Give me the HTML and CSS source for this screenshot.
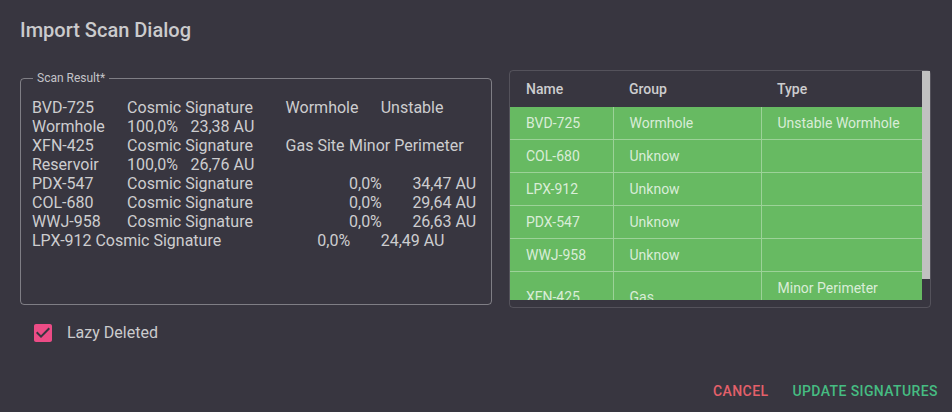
FILE: index.html
```html
<!DOCTYPE html>
<html>
<head>
<meta charset="utf-8">
<link rel="stylesheet" href="styles.css">
</head>
<body>
<div class="dialog">
  <h2 class="title">Import Scan Dialog</h2>
  <div class="content">
    <div class="left">
      <fieldset class="scan">
        <legend>Scan Result*</legend>
        <div class="scan-text">
          <div class="ln"><span class="seg t3">BVD-725</span><span class="seg t5">Cosmic Signature</span><span class="seg t3">Wormhole</span>Unstable</div>
          <div class="ln"><span class="seg t3">Wormhole</span><span class="seg t2">100,0%</span>23,38 AU</div>
          <div class="ln"><span class="seg t3">XFN-425</span><span class="seg t5">Cosmic Signature</span><span class="seg t2">Gas Site</span>Minor Perimeter</div>
          <div class="ln"><span class="seg t3">Reservoir</span><span class="seg t2">100,0%</span>26,76 AU</div>
          <div class="ln"><span class="seg t3">PDX-547</span><span class="seg t7">Cosmic Signature</span><span class="seg t2">0,0%</span>34,47 AU</div>
          <div class="ln"><span class="seg t3">COL-680</span><span class="seg t7">Cosmic Signature</span><span class="seg t2">0,0%</span>29,64 AU</div>
          <div class="ln"><span class="seg t3">WWJ-958</span><span class="seg t7">Cosmic Signature</span><span class="seg t2">0,0%</span>26,63 AU</div>
          <div class="ln"><span class="seg t2">LPX-912</span><span class="seg t7">Cosmic Signature</span><span class="seg t2">0,0%</span>24,49 AU</div>
        </div>
      </fieldset>
      <label class="check">
        <svg class="box" viewBox="3 3 18 18" width="18" height="18"><path d="M19 3H5c-1.11 0-2 .9-2 2v14c0 1.1.89 2 2 2h14c1.11 0 2-.9 2-2V5c0-1.1-.89-2-2-2zm-9 14l-5-5 1.41-1.41L10 14.170l7.59-7.59L19 8l-9 9z"/></svg>
        <span>Lazy Deleted</span>
      </label>
    </div>
    <div class="paper">
      <div class="viewport">
        <div class="scroller">
          <table class="sigs">
            <colgroup><col class="c-name"><col class="c-group"><col class="c-type"></colgroup>
            <thead>
              <tr><th>Name</th><th>Group</th><th>Type</th></tr>
            </thead>
            <tbody>
              <tr><td>BVD-725</td><td>Wormhole</td><td>Unstable Wormhole</td></tr>
              <tr><td>COL-680</td><td>Unknow</td><td></td></tr>
              <tr><td>LPX-912</td><td>Unknow</td><td></td></tr>
              <tr><td>PDX-547</td><td>Unknow</td><td></td></tr>
              <tr><td>WWJ-958</td><td>Unknow</td><td></td></tr>
              <tr><td>XFN-425</td><td>Gas</td><td>Minor Perimeter Reservoir</td></tr>
            </tbody>
          </table>
        </div>
        <div class="vbar"><div class="thumb"></div></div>
      </div>
    </div>
  </div>
  <div class="actions">
    <button class="btn cancel">Cancel</button>
    <button class="btn update">Update Signatures</button>
  </div>
</div>
</body>
</html>
```

FILE: styles.css
```css
html, body {
  margin: 0;
  padding: 0;
  background: #383640;
  font-family: Roboto, "Noto Sans", sans-serif;
}

.dialog {
  width: 952px;
  height: 412px;
  overflow: hidden;
}

.title {
  margin: 0;
  padding: 14px 20px 0;
  font-size: 20px;
  line-height: 32px;
  font-weight: 500;
  color: #cbcbcd;
}

.content {
  display: flex;
  align-items: flex-start;
  padding: 24px 0 0 20px;
}

.left {
  width: 472px;
  display: flex;
  flex-direction: column;
}

.scan {
  box-sizing: border-box;
  margin: 1px 0 0;
  width: 472px;
  height: 234px;
  padding: 13px 8px 17px 11px;
  border: 1px solid rgba(255, 255, 255, 0.36);
  border-radius: 4px;
  min-width: 0;
}

.scan legend {
  margin-left: 1px;
  padding: 0 4px;
  font-size: 12px;
  line-height: 14px;
  color: #c4c4c8;
}

.scan-text {
  font-size: 16px;
  line-height: 19px;
  color: #cdcdcf;
}

.ln {
  white-space: pre;
}

.seg {
  display: inline-block;
}

.t2 { width: 63.4px; }
.t3 { width: 95.1px; }
.t5 { width: 158.5px; }
.t7 { width: 221.9px; }

.check {
  display: flex;
  align-items: center;
  gap: 15px;
  margin: 19px 0 0 14px;
  font-size: 16px;
  line-height: 18px;
  color: #cbcbcd;
}

.box {
  display: block;
  fill: #ec4c86;
}

.paper {
  margin-left: 17px;
  width: 422px;
  box-sizing: border-box;
  border: 1px solid rgba(255, 255, 255, 0.14);
  border-radius: 4px;
  padding-bottom: 7px;
}

.viewport {
  display: flex;
  height: 229px;
}

.scroller {
  flex: 1;
  overflow: hidden;
}

.vbar {
  width: 8px;
  flex: none;
}

.thumb {
  height: 208px;
  background: #c1c1c1;
}

.sigs {
  width: 100%;
  border-collapse: collapse;
  table-layout: fixed;
  font-size: 14px;
}

.c-name { width: 103px; }
.c-group { width: 148px; }

.sigs th {
  height: 36px;
  padding: 0 16px;
  text-align: left;
  font-weight: 500;
  line-height: 18px;
  color: #cdcdcf;
  box-sizing: border-box;
}

.sigs td {
  padding: 7px 16px;
  line-height: 18px;
  background: #67ba62;
  color: rgba(255, 255, 255, 0.76);
  border-bottom: 1px solid rgba(255, 255, 255, 0.35);
  vertical-align: middle;
}

.sigs td + td {
  border-left: 1px solid rgba(255, 255, 255, 0.35);
}

.actions {
  display: flex;
  justify-content: flex-end;
  gap: 8px;
  padding: 31px 6px 0 0;
}

.btn {
  background: none;
  border: none;
  padding: 6px 8px;
  font-family: Roboto, "Noto Sans", sans-serif;
  font-size: 14px;
  font-weight: 500;
  line-height: 24px;
  letter-spacing: 0.4px;
  text-transform: uppercase;
  cursor: pointer;
}

.cancel { color: #e4606a; }
.update { color: #46bc82; }
```
